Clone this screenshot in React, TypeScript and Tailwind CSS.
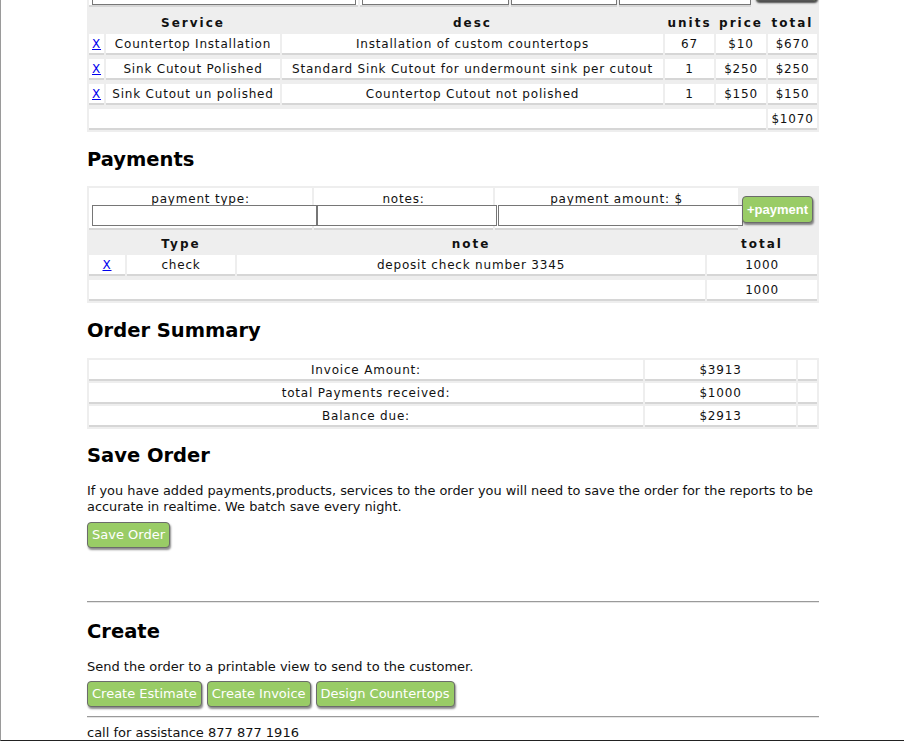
import React from "react";

const cell =
  "bg-white border-b-2 border-[#d6d6d6] h-[21px] flex items-center justify-center whitespace-nowrap";
const head =
  "h-[19px] flex items-end justify-center font-bold tracking-[2px] leading-[14px] whitespace-nowrap";

function Btn({ children, className = "" }: { children: React.ReactNode; className?: string }) {
  return (
    <button
      className={`h-[26px] px-[4px] rounded-[4px] border border-[#6b6b6b] bg-[#99cc66] text-white text-[13px] leading-[24px] shadow-[1px_2px_2px_rgba(0,0,0,0.45)] whitespace-nowrap ${className}`}
    >
      {children}
    </button>
  );
}

function X() {
  return <span className="text-[#0000ee] underline">X</span>;
}

function H2({ children, className = "" }: { children: React.ReactNode; className?: string }) {
  return (
    <h2 className={`text-[19.5px] font-bold leading-[24px] h-[24px] text-black ${className}`}>{children}</h2>
  );
}

export default function App() {
  const services = [
    ["Countertop Installation", "Installation of custom countertops", "67", "$10", "$670"],
    ["Sink Cutout Polished", "Standard Sink Cutout for undermount sink per cutout", "1", "$250", "$250"],
    ["Sink Cutout un polished", "Countertop Cutout not polished", "1", "$150", "$150"],
  ];
  return (
    <div className="h-[741px] w-[904px] overflow-hidden border-l border-[#9a9a9a] border-b border-b-[#222] bg-white pl-[86px] font-['DejaVu_Sans',Verdana,sans-serif] text-[#111]">
      <div className="w-[732px]">
        {/* Services table (scrolled, top cut off) */}
        <div className="mt-[-23px] bg-[#eeeeee] p-[2px] flex flex-col gap-y-[4px] text-[12px] tracking-[0.8px]">
          <div className="h-[28px] flex gap-x-[2px]">
            <div className="w-[271px] bg-white border-b-2 border-[#d6d6d6] flex items-end pl-[3px]">
              <div className="w-[264px] h-[22px] border border-[#777] bg-white" />
            </div>
            <div className="w-[150px] bg-white border-b-2 border-[#d6d6d6] flex items-end pl-[2px]">
              <div className="w-[147px] h-[22px] border border-[#777] bg-white" />
            </div>
            <div className="w-[106px] bg-white border-b-2 border-[#d6d6d6] flex items-end">
              <div className="w-[106px] h-[22px] border border-[#777] bg-white" />
            </div>
            <div className="w-[132px] bg-white border-b-2 border-[#d6d6d6] flex items-end">
              <div className="w-[132px] h-[22px] border border-[#777] bg-white" />
            </div>
            <div className="flex-1 flex items-end pl-[2px]">
              <div className="w-[62px] h-[26px] mb-[6px] rounded-[4px] border border-[#555] bg-[#99cc66] shadow-[1px_2px_2px_rgba(0,0,0,0.7)]" />
            </div>
          </div>
          <div className="grid grid-cols-[15px_174px_381px_49px_50px_49px] gap-x-[2px] gap-y-[4px]">
            <div className={head}></div>
            <div className={head}>Service</div>
            <div className={head}>desc</div>
            <div className={head}>units</div>
            <div className={head}>price</div>
            <div className={head}>total</div>
            {services.map((r, i) => (
              <React.Fragment key={i}>
                <div className={cell}>
                  <X />
                </div>
                <div className={cell}>{r[0]}</div>
                <div className={cell}>{r[1]}</div>
                <div className={cell}>{r[2]}</div>
                <div className={cell}>{r[3]}</div>
                <div className={cell}>{r[4]}</div>
              </React.Fragment>
            ))}
            <div className={`${cell} col-span-5`}></div>
            <div className={cell}>$1070</div>
          </div>
        </div>

        <H2 className="mt-[16px] mb-[14px]">Payments</H2>

        {/* Payments table */}
        <div className="bg-[#eeeeee] p-[2px] text-[12px] tracking-[0.8px]">
          <div className="grid grid-cols-[223px_179px_243px_77px] gap-x-[2px]">
            <div className="bg-white border-b-2 border-[#d6d6d6] h-[42px] flex flex-col items-start">
              <div className="w-full text-center leading-[13px] mt-[5px] h-[12px]">payment type:</div>
              <input className="relative ml-[3px] w-[225px] h-[21px] border border-[#767676] bg-white outline-none" />
            </div>
            <div className="bg-white border-b-2 border-[#d6d6d6] h-[42px] flex flex-col items-start">
              <div className="w-full text-center leading-[13px] mt-[5px] h-[12px]">notes:</div>
              <input className="relative ml-[3px] w-[180px] h-[21px] border border-[#767676] bg-white outline-none" />
            </div>
            <div className="bg-white border-b-2 border-[#d6d6d6] h-[42px] flex flex-col items-start">
              <div className="w-full text-center leading-[13px] mt-[5px] h-[12px]">payment amount: $</div>
              <input className="relative ml-[3px] w-[245px] h-[21px] border border-[#767676] bg-white outline-none" />
            </div>
            <div className="h-[42px] flex items-start pt-[8px] pl-[2px]">
              <Btn className="relative font-['Liberation_Sans',Arial,sans-serif] font-bold tracking-normal h-[27px] leading-[25px]">
                +payment
              </Btn>
            </div>
          </div>
          <div className="mt-[2px] grid grid-cols-[36px_108px_468px_110px] gap-x-[2px] gap-y-[4px]">
            <div className={head}></div>
            <div className={head}>Type</div>
            <div className={head}>note</div>
            <div className={head}>total</div>
            <div className={cell}>
              <X />
            </div>
            <div className={cell}>check</div>
            <div className={cell}>deposit check number 3345</div>
            <div className={cell}>1000</div>
            <div className={`${cell} col-span-3`}></div>
            <div className={cell}>1000</div>
          </div>
        </div>

        <H2 className="mt-[16px] mb-[15px]">Order Summary</H2>

        {/* Summary */}
        <div className="bg-[#eeeeee] p-[2px] grid grid-cols-[554px_151px_19px] gap-x-[2px] gap-y-[2px] text-[12px] tracking-[0.8px]">
          <div className={cell}>Invoice Amount:</div>
          <div className={cell}>$3913</div>
          <div className={cell}></div>
          <div className={cell}>total Payments received:</div>
          <div className={cell}>$1000</div>
          <div className={cell}></div>
          <div className={cell}>Balance due:</div>
          <div className={cell}>$2913</div>
          <div className={cell}></div>
        </div>

        <H2 className="mt-[15px]">Save Order</H2>
        <p className="mt-[15px] text-[12.9px] leading-[16px] text-[#111] whitespace-nowrap">
          If you have added payments,products, services to the order you will need to save the order for the reports to be
          <br />
          accurate in realtime. We batch save every night.
        </p>
        <div className="mt-[7px] flex">
          <Btn>Save Order</Btn>
        </div>

        <div className="mt-[53px] h-px bg-[#9a9a9a]" />
        <div className="h-px bg-[#e6e6e6]" />

        <H2 className="mt-[17px]">Create</H2>
        <p className="mt-[15px] text-[13px] leading-[16px] text-[#111]">
          Send the order to a printable view to send to the customer.
        </p>
        <div className="mt-[6px] flex gap-x-[5px]">
          <Btn>Create Estimate</Btn>
          <Btn>Create Invoice</Btn>
          <Btn>Design Countertops</Btn>
        </div>
        <div className="mt-[9px] h-px bg-[#9a9a9a]" />
        <div className="h-px bg-[#e6e6e6]" />
        <p className="mt-[7px] text-[13px] leading-[16px] text-[#111]">call for assistance 877 877 1916</p>
      </div>
    </div>
  );
}
